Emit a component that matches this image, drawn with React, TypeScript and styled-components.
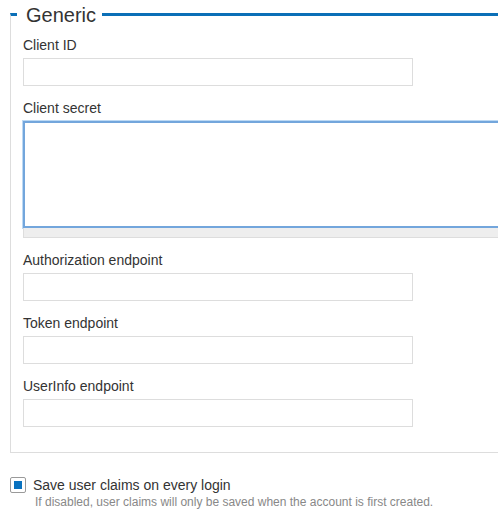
import React from 'react';
import styled, { createGlobalStyle } from 'styled-components';

const GlobalStyle = createGlobalStyle`
	html, body {
		margin: 0;
		padding: 0;
		background: #ffffff;
		overflow: hidden;
	}
	body {
		font-family: 'Liberation Sans', Arial, Helvetica, sans-serif;
		color: #333333;
	}
`;

const fields = [
	{ label: 'Client ID', type: 'input' },
	{ label: 'Client secret', type: 'textarea' },
	{ label: 'Authorization endpoint', type: 'input' },
	{ label: 'Token endpoint', type: 'input' },
	{ label: 'UserInfo endpoint', type: 'input' }
];

function App() {
	const [claims, setClaims] = React.useState(true);

	return (
		<Page>
			<GlobalStyle />
			<Fieldset>
				<Legend>Generic</Legend>
				{fields.map(f => (
					<Field key={f.label}>
						<Label>{f.label}</Label>
						{f.type == 'textarea' ? (
							<>
								<TextArea />
								<ResizeBar />
							</>
						) : (
							<Input type="text" />
						)}
					</Field>
				))}
			</Fieldset>
			<CheckRow onClick={() => setClaims(!claims)}>
				<CheckBox checked={claims} />
				<CheckLabel>Save user claims on every login</CheckLabel>
			</CheckRow>
			<Help>
				If disabled, user claims will only be saved when the account is
				first created.
			</Help>
		</Page>
	);
}

export default App;

const Page = styled.div`
	padding-left: 10px;
`;

const Fieldset = styled.fieldset`
	margin: 0;
	padding: 7px 0 13px 12px;
	min-width: 0;
	border: none;
	border-top: 3px solid #0b6fb7;
	border-left: 1px solid #dddddd;
	border-bottom: 1px solid #dddddd;
`;

const Legend = styled.legend`
	margin-left: -6px;
	padding: 2px 6px 0 9px;
	font-size: 20px;
	line-height: 26px;
	color: #333333;
`;

const Field = styled.div`
	display: flex;
	flex-direction: column;
	align-items: flex-start;
	margin-bottom: 12px;
`;

const Label = styled.label`
	font-size: 14px;
	line-height: 20px;
	color: #333333;
	margin-bottom: 3px;
`;

const Input = styled.input`
	box-sizing: border-box;
	width: 390px;
	height: 28px;
	margin: 0;
	padding: 4px 6px;
	border: 1px solid #dddddd;
	border-radius: 0;
	background: #ffffff;
	outline: none;
`;

const TextArea = styled.textarea`
	box-sizing: border-box;
	display: block;
	align-self: stretch;
	height: 107px;
	margin: 0;
	padding: 4px 6px;
	border: 2px solid #73a6dc;
	border-right: none;
	box-shadow: 0 0 0 1px #bcd9f4;
	border-radius: 0;
	resize: none;
	outline: none;
	background: #ffffff;
`;

const ResizeBar = styled.div`
	box-sizing: border-box;
	align-self: stretch;
	height: 10px;
	background: #eeeeee;
	border: 1px solid #dddddd;
	border-top: none;
	border-right: none;
`;

const CheckRow = styled.div`
	display: flex;
	align-items: center;
	gap: 7px;
	margin-top: 23px;
	height: 18px;
	cursor: default;
`;

const CheckBox = styled.span<{ checked: boolean }>`
	box-sizing: border-box;
	width: 16px;
	height: 16px;
	border: 1px solid #9a9a9a;
	border-radius: 2px;
	background: #ffffff;
	display: flex;
	align-items: center;
	justify-content: center;

	&::after {
		content: '';
		width: 8px;
		height: 8px;
		background: ${({ checked }) => (checked ? '#0a72bf' : 'transparent')};
	}
`;

const CheckLabel = styled.span`
	font-size: 14px;
	line-height: 18px;
	color: #333333;
`;

const Help = styled.div`
	padding-left: 25px;
	font-size: 12px;
	line-height: 16px;
	color: #888888;
`;
